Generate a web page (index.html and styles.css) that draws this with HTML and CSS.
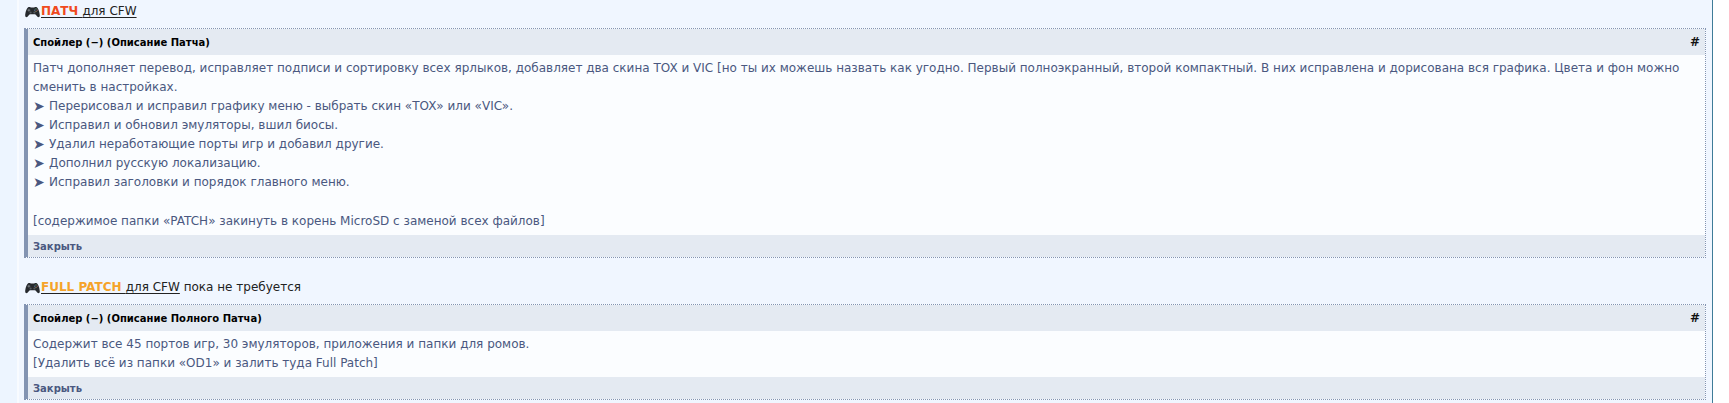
FILE: index.html
```
<!DOCTYPE html>
<html lang="ru">
<head>
<meta charset="utf-8">
<title>Патч для CFW</title>
<link rel="stylesheet" href="styles.css">
</head>
<body>
<svg class="defs" aria-hidden="true">
  <symbol id="gamepad" viewBox="0 0 15 12">
    <path fill="#26292d" d="M3.6 1C5 .6 5.6 1.5 6.300 1.600H8.700C9.400 1.500 10 .6 11.400 1C13.300 1.600 14.800 6.800 14.800 9.600C14.800 11.200 13.500 11.700 12.500 10.800C11.500 9.900 11 8.200 9.700 8.200H5.300C4 8.200 3.500 9.900 2.500 10.800C1.500 11.700.2 11.200.2 9.600C.2 6.800 1.700 1.600 3.600 1Z"/>
    <path stroke="#85898d" stroke-width=".8" d="M2.500 4.200H5.300M3.900 2.800V5.600"/>
    <circle cx="5.600" cy="6.500" r="1.100" fill="#55595e"/>
    <circle cx="9.400" cy="6.500" r="1.100" fill="#55595e"/>
    <circle cx="11" cy="2.900" r=".6" fill="#5c9a69"/>
    <circle cx="12.300" cy="4.200" r=".6" fill="#a75d59"/>
    <circle cx="9.800" cy="4.200" r=".6" fill="#6384ac"/>
    <circle cx="11" cy="5.500" r=".6" fill="#b59b61"/>
  </symbol>
</svg>
<main class="post">
  <section class="entry">
    <p class="title"><svg class="icon" aria-hidden="true"><use href="#gamepad"/></svg><a href="#patch"><b class="red">ПАТЧ </b>для CFW</a></p>
    <div class="spoiler" id="patch">
      <div class="head"><button class="toggle" type="button">Спойлер (−) (Описание Патча)</button><a class="anchor" href="#patch">#</a></div>
      <div class="body">
        <p>Патч дополняет перевод, исправляет подписи и сортировку всех ярлыков, добавляет два скина TOX и VIC [но ты их можешь назвать как угодно. Первый полноэкранный, второй компактный. В них исправлена и дорисована вся графика. Цвета и фон можно сменить в настройках.</p>
        <ul class="list">
          <li>Перерисовал и исправил графику меню - выбрать скин «TOX» или «VIC».</li>
          <li>Исправил и обновил эмуляторы, вшил биосы.</li>
          <li>Удалил неработающие порты игр и добавил другие.</li>
          <li>Дополнил русскую локализацию.</li>
          <li>Исправил заголовки и порядок главного меню.</li>
        </ul>
        <p>[содержимое папки «PATCH» закинуть в корень MicroSD с заменой всех файлов]</p>
      </div>
      <button class="close" type="button">Закрыть</button>
    </div>
  </section>
  <section class="entry">
    <p class="title"><svg class="icon" aria-hidden="true"><use href="#gamepad"/></svg><a href="#full-patch"><b class="orange">FULL PATCH </b>для CFW</a> пока не требуется</p>
    <div class="spoiler" id="full-patch">
      <div class="head"><button class="toggle" type="button">Спойлер (−) (Описание Полного Патча)</button><a class="anchor" href="#full-patch">#</a></div>
      <div class="body">
        <p>Содержит все 45 портов игр, 30 эмуляторов, приложения и папки для ромов.</p>
        <p>[Удалить всё из папки «OD1» и залить туда Full Patch]</p>
      </div>
      <button class="close" type="button">Закрыть</button>
    </div>
  </section>
</main>
</body>
</html>
```
FILE: styles.css
```
* {
  box-sizing: border-box;
}

body {
  margin: 0;
  background: #fff;
  color: #222;
  font: 12px/19px Verdana, "DejaVu Sans", sans-serif;
}

p,
ul {
  margin: 0;
  padding: 0;
}

.defs {
  display: none;
}

.post {
  min-height: 100vh;
  margin-right: 16px;
  padding: 0 6px 0 24px;
  border-right: 1px solid #3f7c98;
  background: linear-gradient(90deg, #edf5ff 17px, #f8fbff 17px, #f8fbff 19px, #f0f6ff 19px);
}

.entry + .entry {
  margin-top: 18px;
}

.title {
  display: flex;
  align-items: center;
  height: 28px;
  padding-bottom: 5px;
  white-space: pre;
}

.title a {
  color: #222;
  text-underline-offset: 2px;
}

.red {
  color: #f04a20;
}

.orange {
  color: #f5a32a;
}

.icon {
  width: 15px;
  height: 12px;
  margin: 0 1px;
}

.spoiler {
  border: 1px dotted #8394b2;
  border-left: 4px solid #8394b2;
  background: #fbfdff;
}

.head {
  display: flex;
  align-items: center;
  justify-content: space-between;
  height: 26px;
  padding: 0 5px;
  background: #e4eaf2;
}

button {
  padding: 0;
  border: 0;
  background: none;
  font: bold 10px/19px Verdana, "DejaVu Sans", sans-serif;
  text-align: left;
}

.toggle {
  color: #000;
}

.anchor {
  color: #111;
  font-weight: bold;
  text-decoration: none;
}

.body {
  padding: 4px 5px;
  color: #4a5880;
}

.list {
  margin-bottom: 20px;
  list-style: none;
}

.list li {
  display: flex;
}

.list li::before {
  content: "➤";
  width: 16px;
  font-size: 14px;
}

.close {
  display: block;
  width: 100%;
  height: 22px;
  padding: 0 5px;
  background: #e4eaf2;
  color: #4a5880;
}
```
